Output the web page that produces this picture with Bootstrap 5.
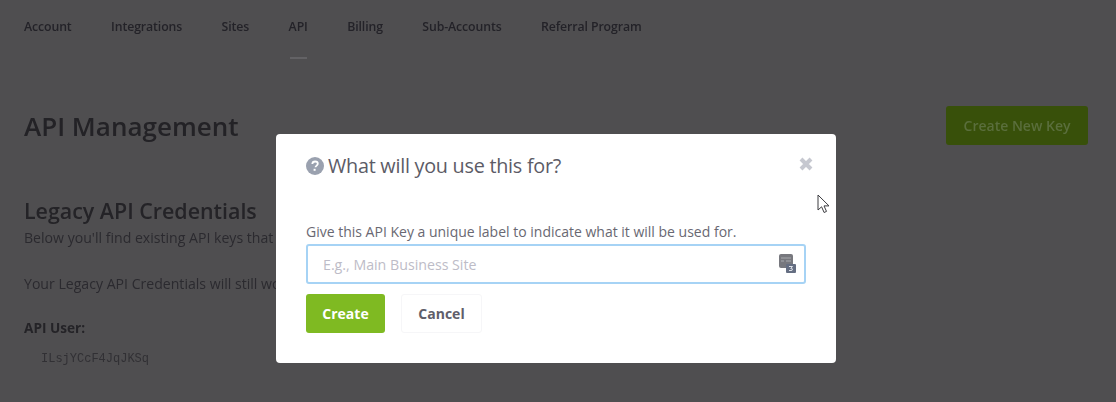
<!DOCTYPE html>
<html lang="en">
<head>
<meta charset="UTF-8">
<title>API Management</title>
<link href="https://cdn.jsdelivr.net/npm/bootstrap@5.3.3/dist/css/bootstrap.min.css" rel="stylesheet">
<style>
html, body { height: 402px; overflow: hidden; }
body { background: #4f4e50; color: #2c2b30; font-family: "Open Sans", "Liberation Sans", sans-serif; position: relative; }
.acct-nav { padding: 18px 24px 0; gap: 39.4px; height: 60px; filter: blur(.4px); }
.acct-nav a { color: #232228; font: 600 12.3px/18px "Open Sans", sans-serif; text-decoration: none; position: relative; letter-spacing: -.1px; }
.acct-nav a.on::after { content: ""; position: absolute; left: 1px; right: 1px; top: 39px; height: 2px; background: #636265; }
.page-body { padding: 0 28px 0 24px; filter: blur(.4px); }
.head-row { padding-top: 46px; height: 126px; }
.page-title { font: 600 26px/40px "Open Sans", sans-serif; margin: 0; color: #232226; }
.new-key { width: 142px; height: 39px; background: #38500a; border: 0; border-radius: 3px; color: #5a6e3c; font: 600 14px/39px "Open Sans", sans-serif; padding: 0; }
.sub-title { font: 600 21.4px/24px "Open Sans", sans-serif; margin: 13px 0 5px; color: #242327; }
.txt-line { font-size: 14.1px; line-height: 20px; margin: 0; color: #2b2a2f; white-space: nowrap; }
.txt-gap { margin-top: 26px; }
.user-label { font-size: 13.6px; font-weight: 700; line-height: 20px; margin: 24px 0 0; color: #242327; }
.mono-key { font: 12px/20px "Liberation Mono", monospace; margin: 11px 0 0 17px; color: #313034; }
.dlg { position: absolute; left: 276px; top: 134px; width: 560px; height: 229px; background: #fff; border: 0; border-radius: 4px; padding: 0 30px; }
.dlg-head { height: 63px; }
.dlg-title { font: 400 19.8px/28px "Open Sans", sans-serif; margin: 0; color: #5c5b66; letter-spacing: -.25px; }
.dlg-close { position: absolute; right: 22px; top: 22px; width: 16px; height: 16px; }
.dlg-label { font-size: 14px; line-height: 18px; color: #696872; margin: 26px 0 3px; white-space: nowrap; }
.key-input { height: 40px; width: 500px; border: 2px solid #a6d3f5; border-radius: 3px; padding: 0 40px 0 15px; font-size: 14.2px; box-shadow: none; }
.key-input::placeholder { color: #bdbcc7; opacity: 1; }
.input-wrap { position: relative; width: 500px; }
.input-icon { position: absolute; right: 10px; top: 10px; }
.dlg-btns { gap: 16px; margin-top: 10px; }
.btn-create { width: 79px; height: 39px; background: #7fba22; border: 0; border-radius: 3px; color: #fff; font-weight: 700; font-size: 14px; padding: 0; }
.btn-cancel { width: 81px; height: 39px; background: #fff; border: 1px solid #f6f6f8; border-radius: 3px; color: #5f5e6a; font-weight: 700; font-size: 14px; padding: 0; }
.arrow-cursor { position: absolute; left: 817px; top: 194px; }
</style>
</head>
<body>
<nav class="d-flex acct-nav">
    <a href="#">Account</a>
    <a href="#">Integrations</a>
    <a href="#">Sites</a>
    <a href="#" class="on">API</a>
    <a href="#">Billing</a>
    <a href="#">Sub-Accounts</a>
    <a href="#">Referral Program</a>
</nav>

<div class="page-body">
    <div class="d-flex justify-content-between head-row">
        <h1 class="page-title">API Management</h1>
        <button class="new-key">Create New Key</button>
    </div>
    <h2 class="sub-title">Legacy API Credentials</h2>
    <p class="txt-line">Below you'll find existing API keys that</p>
    <p class="txt-line txt-gap">Your Legacy API Credentials will still work</p>
    <p class="user-label">API User:</p>
    <p class="mono-key">ILsjYCcF4JqJKSq</p>
</div>

<div class="dlg">
    <div class="d-flex align-items-center gap-1 dlg-head">
        <svg width="18" height="18" viewBox="0 0 18 18"><circle cx="9" cy="9" r="9" fill="#9aa1af"/><path d="M6.3 7c.1-1.7 1.3-2.5 2.8-2.5 1.6 0 2.7.9 2.7 2.2 0 1.9-2.3 1.9-2.3 3.6" fill="none" stroke="#fff" stroke-width="1.8"/><rect x="7.6" y="11.8" width="2" height="2" fill="#fff"/></svg>
        <h5 class="dlg-title">What will you use this for?</h5>
    </div>
    <svg class="dlg-close" viewBox="0 0 16 16"><path d="M3 3l10 10M13 3L3 13" stroke="#c6c8d0" stroke-width="4"/></svg>
    <p class="dlg-label">Give this API Key a unique label to indicate what it will be used for.</p>
    <div class="input-wrap">
        <input type="text" class="form-control key-input" placeholder="E.g., Main Business Site">
        <svg class="input-icon" width="17" height="19" viewBox="0 0 17 19"><rect x="0" y="0" width="14" height="14" rx="2" fill="#77787e"/><path d="M2 4h10M2 7h3M7 7h5" stroke="#a9aaae" stroke-width="1"/><rect x="7" y="10" width="10" height="9" rx="1" fill="#656e82"/><path d="M10 12.5h3.5l-1.8 2 1.8.4-.6 1.6H10" fill="none" stroke="#dfe2e8" stroke-width="1"/></svg>
    </div>
    <div class="d-flex dlg-btns">
        <button class="btn btn-create">Create</button>
        <button class="btn btn-cancel">Cancel</button>
    </div>
</div>

<svg class="arrow-cursor" width="14" height="20" viewBox="0 0 14 20"><path d="M1 1v15l3.6-3.2 2.5 5.7 2.4-1.1-2.5-5.5H12z" fill="#fff" stroke="#3c3c40" stroke-width="1"/></svg>

<script src="https://cdn.jsdelivr.net/npm/bootstrap@5.3.3/dist/js/bootstrap.bundle.min.js"></script>
</body>
</html>
